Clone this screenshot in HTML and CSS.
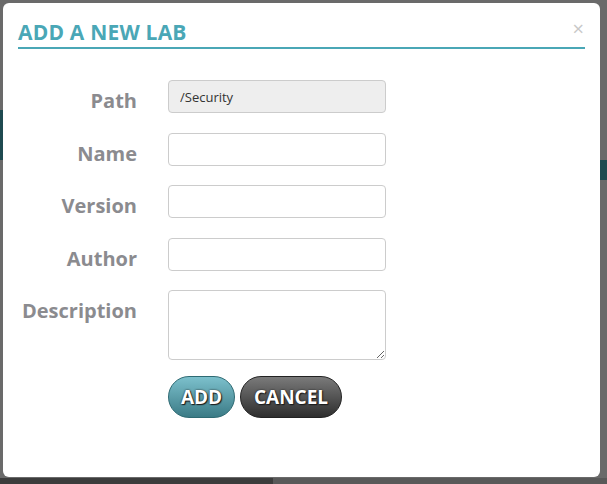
FILE: index.html
```html
<!DOCTYPE html>
<html>

<head>
    <title>Add a new lab</title>
    <link rel="stylesheet" href="styles.css">
</head>

<body>
    <div class="backdrop">
        <div class="modal">
            <div class="modal-header">
                <h2>ADD A NEW LAB</h2>
                <span class="close">&times;</span>
            </div>

            <div class="form-grid">
                <label for="path">Path</label>
                <input type="text" id="path" value="/Security" readonly />

                <label for="name">Name</label>
                <input type="text" id="name" />

                <label for="version">Version</label>
                <input type="text" id="version" />

                <label for="author">Author</label>
                <input type="text" id="author" />

                <label for="description">Description</label>
                <textarea id="description"></textarea>

                <div class="button-row">
                    <button class="btn btn-add">ADD</button>
                    <button class="btn btn-cancel">CANCEL</button>
                </div>
            </div>
        </div>
    </div>
</body>

</html>
```

FILE: styles.css
```css
body {
    margin: 0;
    padding: 0;
    background-color: #6a6a6a;
    font-family: "Open Sans", Arial, sans-serif;
}

/* page behind the overlay, only small slivers show */
.backdrop {
    width: 607px;
    height: 484px;
    padding: 3px 0 0 3px;
    box-sizing: border-box;
    background:
        linear-gradient(#1f4a50, #1f4a50) 0 110px / 3px 50px no-repeat,
        linear-gradient(#1f4a50, #1f4a50) 600px 160px / 7px 20px no-repeat,
        linear-gradient(#3c3c3c, #3c3c3c) 0 478px / 273px 6px no-repeat,
        linear-gradient(#595959, #595959) 273px 478px / 334px 6px no-repeat,
        #6a6a6a;
}

.modal {
    width: 597px;
    height: 474px;
    background-color: white;
    border-radius: 6px;
    padding: 0 15px;
    box-sizing: border-box;
}

.modal-header {
    position: relative;
    padding-top: 16px;
}

.modal-header h2 {
    margin: 0;
    font-size: 21px;
    line-height: 27px;
    font-weight: bold;
    letter-spacing: 0.2px;
    color: #4aa7b6;
    border-bottom: 2px solid #4aa7b6;
    padding-bottom: 1px;
}

.close {
    position: absolute;
    top: 17px;
    right: 1px;
    color: #c8c8c8;
    font-size: 20px;
    line-height: 18px;
}

.form-grid {
    display: grid;
    grid-template-columns: 119px 218px;
    column-gap: 31px;
    row-gap: 19.5px;
    margin-top: 31px;
}

label {
    text-align: right;
    font-weight: bold;
    font-size: 20px;
    line-height: 24px;
    height: 33px;
    box-sizing: border-box;
    color: #8b8b8f;
    padding-top: 9px;
}

input[type="text"],
textarea {
    height: 33px;
    box-sizing: border-box;
    border: 1px solid #cccccc;
    border-radius: 4px;
    padding: 4px 11px;
    font-family: "Open Sans", Arial, sans-serif;
    font-size: 13px;
    color: #333;
}

input[readonly] {
    background-color: #eeeeee;
}

textarea {
    height: 70px;
    resize: vertical;
}

.button-row {
    grid-column: 2;
    display: flex;
    gap: 5px;
    margin-top: -3.5px;
}

.btn {
    height: 42px;
    border-radius: 21px;
    padding: 0;
    font-family: "Open Sans", Arial, sans-serif;
    font-weight: bold;
    font-size: 19px;
    color: white;
    text-shadow: 0 0 2px #1c1c1c, 1px 1px 1px #1c1c1c;
}

.btn-add {
    width: 67px;
    background: linear-gradient(#7cc0cc, #3b7b86);
    border: 1px solid #2e6a73;
}

.btn-cancel {
    width: 102px;
    background: linear-gradient(#7a7a7a, #2e2e2e);
    border: 1px solid #222;
}
```
